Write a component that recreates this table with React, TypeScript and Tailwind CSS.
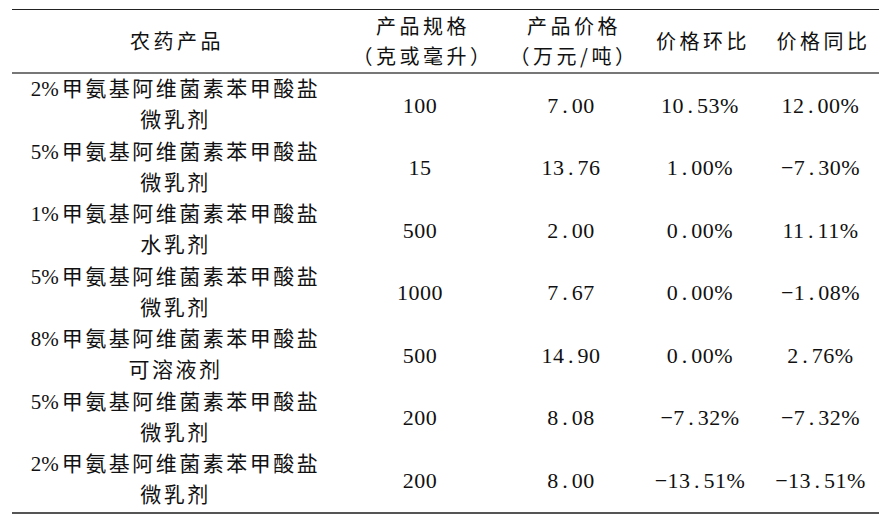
import React from 'react';

interface Row {
  pct: string;
  name: string;
  form: string;
  spec: string;
  price: string;
  mom: string;
  yoy: string;
}

const rows: Row[] = [
  { pct: '2%', name: '甲氨基阿维菌素苯甲酸盐', form: '微乳剂', spec: '100', price: '7.00', mom: '10.53%', yoy: '12.00%' },
  { pct: '5%', name: '甲氨基阿维菌素苯甲酸盐', form: '微乳剂', spec: '15', price: '13.76', mom: '1.00%', yoy: '−7.30%' },
  { pct: '1%', name: '甲氨基阿维菌素苯甲酸盐', form: '水乳剂', spec: '500', price: '2.00', mom: '0.00%', yoy: '11.11%' },
  { pct: '5%', name: '甲氨基阿维菌素苯甲酸盐', form: '微乳剂', spec: '1000', price: '7.67', mom: '0.00%', yoy: '−1.08%' },
  { pct: '8%', name: '甲氨基阿维菌素苯甲酸盐', form: '可溶液剂', spec: '500', price: '14.90', mom: '0.00%', yoy: '2.76%' },
  { pct: '5%', name: '甲氨基阿维菌素苯甲酸盐', form: '微乳剂', spec: '200', price: '8.08', mom: '−7.32%', yoy: '−7.32%' },
  { pct: '2%', name: '甲氨基阿维菌素苯甲酸盐', form: '微乳剂', spec: '200', price: '8.00', mom: '−13.51%', yoy: '−13.51%' },
];

const cols = 'grid grid-cols-[324px_168px_134px_124px_117px]';

// 数字里的小数点比较宽，单独加点间距
function Num({ v }: { v: string }) {
  const [a, b] = v.split('.');
  if (b === undefined) return <span>{v}</span>;
  return (
    <span>
      {a}
      <span className="mx-[3.5px]">.</span>
      {b}
    </span>
  );
}

export default function App() {
  return (
    <div className="w-[889px] h-[522px] bg-white text-[#111] font-['Liberation_Serif','Noto_Sans_CJK_SC',serif]">
      <div className="pt-[9px] px-[12px]">
        <div className="w-[867px] border-t-[1.5px] border-[#222]">
          {/* 表头 */}
          <div className={`${cols} h-[62px] items-center text-center font-['Noto_Sans_CJK_SC',sans-serif] text-[20px] leading-[30px] tracking-[3.5px] pl-[3px]`}>
            <div>农药产品</div>
            <div>
              <div>产品规格</div>
              <div>（克或毫升）</div>
            </div>
            <div>
              <div>产品价格</div>
              <div>（万元/吨）</div>
            </div>
            <div>价格环比</div>
            <div>价格同比</div>
          </div>
          <div className="border-t-2 border-[#777]" />

          {rows.map((r, i) => (
            <div key={i} className={`${cols} h-[62.5px] items-center text-center`}>
              <div className="text-[21px] leading-[31px] tracking-[2.5px] pl-[3px]">
                <div>
                  <span className="tracking-normal mr-[3px]">{r.pct}</span>
                  {r.name}
                </div>
                <div>{r.form}</div>
              </div>
              <div className="text-[22px] tracking-[0.5px]"><Num v={r.spec} /></div>
              <div className="text-[22px] tracking-[0.5px]"><Num v={r.price} /></div>
              <div className="text-[22px] tracking-[0.5px]"><Num v={r.mom} /></div>
              <div className="text-[22px] tracking-[0.5px]"><Num v={r.yoy} /></div>
            </div>
          ))}
          <div className="border-t-2 border-[#555]" />
        </div>
      </div>
    </div>
  );
}
